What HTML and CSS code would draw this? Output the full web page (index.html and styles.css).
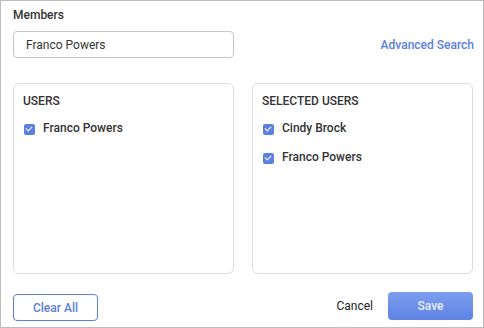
FILE: index.html
```html
<!DOCTYPE html>
<html lang="en">
<head>
    <meta charset="UTF-8">
    <meta name="viewport" content="width=device-width, initial-scale=1.0">
    <title>Members</title>
    <link rel="stylesheet" href="styles.css">
</head>
<body>
    <div class="dialog">
        <div class="label">Members</div>

        <div class="search-row">
            <input class="search-input" type="text" value="Franco Powers">
            <a class="link" href="#">Advanced Search</a>
        </div>

        <div class="lists">
            <div class="panel">
                <h3>USERS</h3>
                <label class="item"><span class="check"></span>Franco Powers</label>
            </div>
            <div class="panel">
                <h3>SELECTED USERS</h3>
                <label class="item"><span class="check"></span>Cindy Brock</label>
                <label class="item"><span class="check"></span>Franco Powers</label>
            </div>
        </div>

        <div class="footer">
            <button class="btn btn-outline">Clear All</button>
            <div class="footer-right">
                <button class="btn btn-text">Cancel</button>
                <button class="btn btn-primary">Save</button>
            </div>
        </div>
    </div>
</body>
</html>
```

FILE: styles.css
```css
body {
    margin: 0;
    font-family: Roboto, "Liberation Sans", sans-serif;
    color: #333;
    background: #fff;
}
.dialog {
    width: 484px; height: 328px; box-sizing: border-box;
    border: 1px solid #bdbdbd;
    padding: 6px 10px 0 12px;
}
.label { font-size: 12px; font-weight: 500; line-height: 16px; color: #333; }
.search-row {
    display: flex; align-items: center; justify-content: space-between;
    margin-top: 8px;
}
.search-input {
    width: 221px; height: 27px; box-sizing: border-box;
    border: 1px solid #c6c6c6; border-radius: 4px;
    padding: 0 12px; margin: 0;
    font-family: inherit; font-size: 12px; color: #333;
    outline: none;
}
.link {
    font-size: 12px; font-weight: 500; color: #5b80e0;
    text-decoration: none; margin-right: -1px;
}
.lists {
    display: grid; grid-template-columns: 221px 221px; gap: 18px;
    margin-top: 25px;
}
.panel {
    height: 191px; box-sizing: border-box;
    border: 1px solid #dcdcdc; border-radius: 6px;
    padding: 9px 9px;
}
.panel h3 {
    margin: 0 0 11px; font-size: 12px; font-weight: 500; line-height: 16px; color: #333;
}
.item {
    display: flex; align-items: center; gap: 8px;
    font-size: 12px; font-weight: 500; line-height: 16px; color: #333;
    margin-bottom: 13px; padding-left: 1px;
}
.check {
    width: 11px; height: 11px; border-radius: 2px; background: #5b80e0;
    position: relative; margin-top: 2px;
}
.check::after {
    content: ""; position: absolute; left: 3px; top: 1.5px;
    width: 3px; height: 5px;
    border: solid #fff; border-width: 0 1.5px 1.5px 0;
    transform: rotate(45deg);
}
.footer {
    display: flex; justify-content: space-between; align-items: flex-start;
    margin-top: 18px;
}
.footer-right { display: flex; align-items: center; gap: 15px; }
.btn {
    font-family: inherit; font-size: 12px; font-weight: 500;
    height: 27px; box-sizing: border-box; border-radius: 4px; cursor: pointer;
}
.btn-outline {
    width: 85px; margin-top: 2px;
    background: #fff; color: #5b80e0; border: 1px solid #5b80e0;
}
.btn-text { background: none; border: none; color: #222; font-weight: 400; padding: 0; }
.btn-primary {
    width: 85px; height: 28px; border: none;
    background: linear-gradient(#7b9ef0, #5e82e2);
    color: #e9effc;
}
```
